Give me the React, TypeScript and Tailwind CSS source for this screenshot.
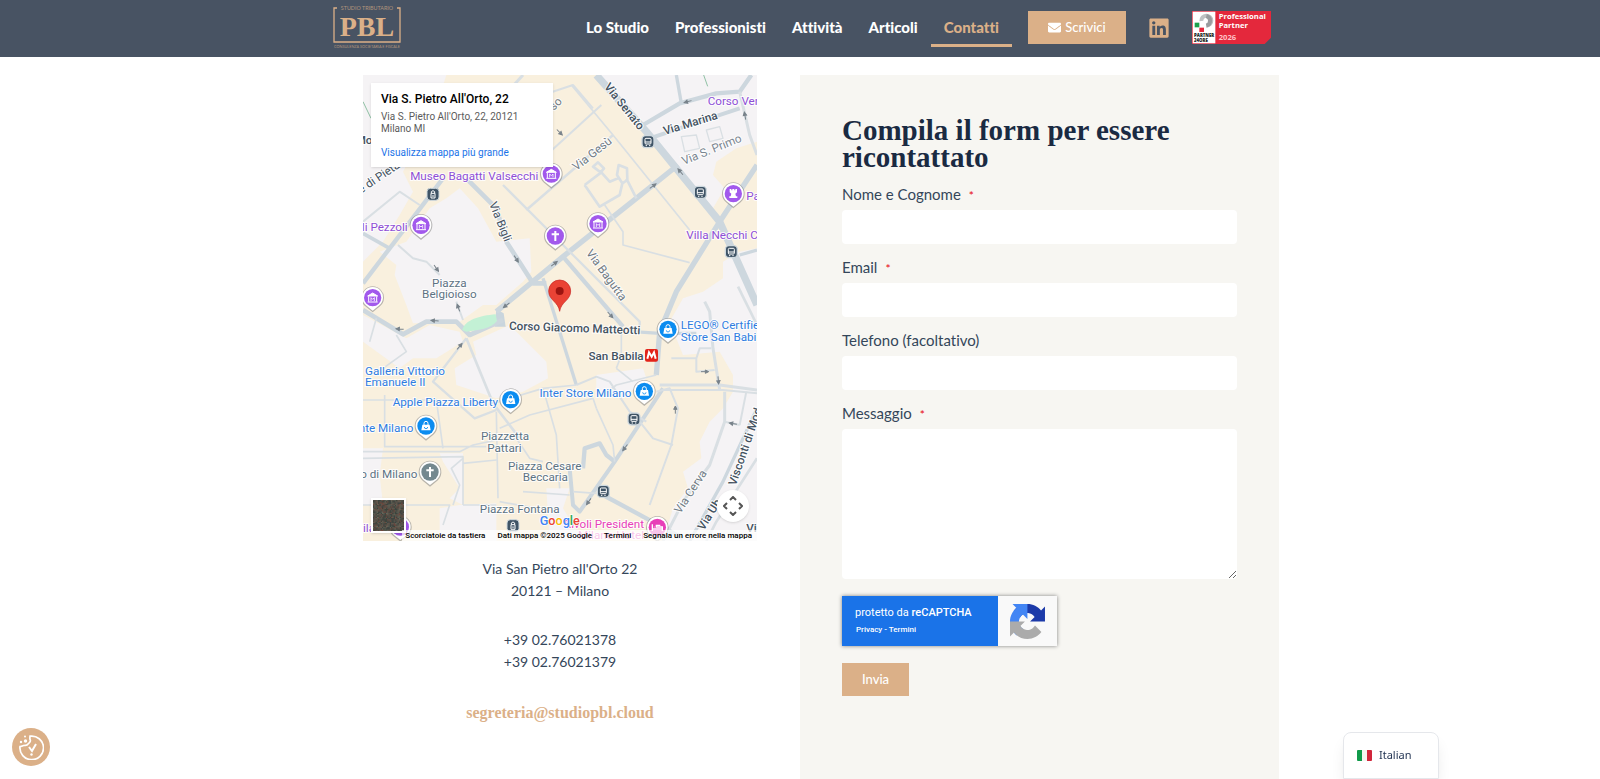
import type { ReactNode } from 'react'
import { FaEnvelope, FaLinkedin } from 'react-icons/fa'

type Point = { x: number; y: number }

type Label = Point & {
  text: string
  fill: string
  rotate?: number
  anchor?: 'start' | 'middle' | 'end'
  weight?: number
}

type Road = { d: string; width: number }

const PURPLE = '#8e4fd6'
const BLUE = '#2f7de1'
const SLATE = '#5d7383'
const STREET = '#44525f'
const PINK = '#e83fb8'

const greyAreas = [
  'M0 0H250L215 110L120 290L150 350L110 420L60 500L0 560Z',
  'M290 340L345 400L400 500L500 490L505 590L480 620L400 690L360 690L290 740L150 745L130 690L95 600L100 570L50 530L130 500L200 400L250 370Z',
  'M700 0H1182V200L1120 220L1060 260L1050 300L1085 340L1050 400L830 130Z',
  'M1182 520L1130 530L1080 560L1080 610L1020 650L960 670L920 740L960 840L1070 830L1110 900V950L1080 1000L1040 1040L1010 1100L1015 1150L960 1190L975 1240L930 1300L900 1398H1182Z',
  'M330 800L440 750L550 860L555 910L480 950L400 970L280 930L275 880L340 840Z',
  'M0 720L130 790L200 750L290 770L300 800L220 850L150 850L110 880L0 800Z',
  'M290 1290L400 1285V1398H230V1300Z',
  'M0 1120H60L50 1200L60 1290H0Z',
  'M700 900L840 880L850 910L780 970L700 950Z',
  'M230 1135H300V1290L260 1270L290 1240L240 1160Z',
  'M550 1240H620L600 1300L660 1398H560Z',
]

const roads: Road[] = [
  // main streets
  { d: 'M700 0L850 170L1070 440L1182 690', width: 22 },
  { d: 'M1182 270L1070 440L940 650L890 770L880 900', width: 16 },
  { d: 'M945 270L820 370L600 545L400 710', width: 16 },
  { d: 'M310 310L400 400L430 500L510 625L550 625', width: 14 },
  { d: 'M540 610L640 930', width: 10 },
  { d: 'M0 705L120 778L190 740L280 740L320 780L420 735', width: 14 },
  { d: 'M0 625L80 520L240 310', width: 13 },
  { d: 'M840 150L950 85L1060 55L1130 50L1165 0', width: 13 },
  { d: 'M860 190L1010 140L1130 100', width: 12 },
  { d: 'M600 545L780 755', width: 13 },
  { d: 'M810 770L890 775H1000', width: 10 },
  { d: 'M660 1180L665 1120L710 1105L730 1140L755 1160', width: 13 },
  { d: 'M900 940L755 1160L650 1310L630 1290L620 1180', width: 12 },
  { d: 'M720 1260L850 1330L960 1390', width: 13 },
  { d: 'M0 475L80 520', width: 11 },
  { d: 'M1130 540L1182 525', width: 10 },
  // secondary streets
  { d: 'M890 930H1070L1182 945', width: 9 },
  { d: 'M1025 680L1040 710L1050 820L1070 945', width: 9 },
  { d: 'M1125 635L1182 750', width: 8 },
  { d: 'M1085 950V1040L1040 1170L960 1280L900 1398', width: 9 },
  { d: 'M1182 1000L1080 1220L980 1398', width: 10 },
  { d: 'M1182 1150L1060 1340L1030 1398', width: 8 },
  { d: 'M940 0L955 85', width: 10 },
  { d: 'M1130 50L1160 180L1182 240', width: 9 },
  { d: 'M480 0L370 120', width: 9 },
  { d: 'M310 790L390 985L470 1090', width: 8 },
  { d: 'M310 790L210 920L335 1030L400 1005', width: 7 },
  { d: 'M420 330L600 510L770 680L830 740V770', width: 7 },
  { d: 'M490 405L750 180', width: 7 },
  { d: 'M625 30L750 180L980 465', width: 5 },
  { d: 'M540 60L630 30L690 100', width: 6 },
  { d: 'M540 250L715 90', width: 6 },
  { d: 'M725 390L780 470V510L980 563', width: 5 },
  { d: 'M820 370L790 310M665 330L710 395L770 360L778 325L762 300L767 270L792 280L793 315L778 325M665 330L715 292L740 320L765 310M690 275L705 262L723 280L713 292Z', width: 8 },
  { d: 'M955 185L1000 180L1010 220L965 230Z M1030 165L1070 155L1080 190L1040 200Z', width: 4 },
  { d: 'M880 950L920 940L945 1000L925 1110L860 1290', width: 6 },
  { d: 'M830 1040L870 1090L930 1110', width: 6 },
  { d: 'M925 850H1000L1010 820H1045M1000 850V890L1055 885', width: 6 },
  { d: 'M1182 955L1080 945L900 945', width: 6 },
  { d: 'M1130 1050L1085 1040M1150 950L1130 1050', width: 6 },
  { d: 'M640 930L700 905L740 920L800 1010L850 1040', width: 6 },
  { d: 'M390 985L540 940L640 930M410 1060L500 1020L690 970M540 940L580 1080L590 1240', width: 5 },
  { d: 'M700 1000L750 1110L755 1160M690 970L700 1000', width: 5 },
  { d: 'M760 880L810 920M880 900L760 930L720 960M775 770V840L760 880', width: 5 },
  { d: 'M0 975H220L240 1120M65 960V1115H370M0 1130H290L330 1110L470 1080', width: 5 },
  { d: 'M0 1150L300 1145V1290M300 1165L400 1155M400 1010L405 1270', width: 5 },
  { d: 'M0 1290H260L240 1350M300 1290H400M410 1280L520 1300', width: 5 },
  { d: 'M300 1150L265 1180L290 1230L270 1290', width: 5 },
  { d: 'M105 510L150 550L190 560L230 600', width: 6 },
  { d: 'M300 735L280 680M0 440L110 350L170 390', width: 6 },
  { d: 'M40 730L20 800M60 880L130 830L100 780', width: 5 },
  { d: 'M460 1090L500 1150L540 1160M480 1250L620 1260M630 1250L700 1255', width: 5 },
]

const streetLabels: Label[] = [
  { text: 'Via Senato', x: 722, y: 36, rotate: 51, fill: STREET, weight: 500 },
  { text: 'Via Marina', x: 905, y: 180, rotate: -17, fill: STREET, weight: 500 },
  { text: 'Via S. Primo', x: 962, y: 270, rotate: -22, fill: '#7a8590' },
  { text: 'Via Gesù', x: 640, y: 288, rotate: -38, fill: '#6f7a84' },
  { text: 'Via Bigli', x: 378, y: 386, rotate: 68, fill: STREET },
  { text: 'Via Bagutta', x: 668, y: 534, rotate: 54, fill: '#6f7a84' },
  { text: 'Corso Giacomo Matteotti', x: 438, y: 764, rotate: 2, fill: STREET, weight: 500 },
  { text: 'Via Cerva', x: 952, y: 1318, rotate: -57, fill: '#6f7a84' },
  { text: 'Visconti di Mod', x: 1118, y: 1234, rotate: -71, fill: STREET, weight: 500 },
  { text: 'Via Ub', x: 1022, y: 1368, rotate: -58, fill: STREET, weight: 500 },
  { text: 'e di Pietà', x: -6, y: 356, rotate: -34, fill: STREET },
  { text: 'Mo', x: -22, y: 208, fill: STREET, weight: 500 },
  { text: 'Vi', x: 1150, y: 1372, fill: STREET, weight: 500 },
  { text: 'so', x: 572, y: 108, rotate: -45, fill: '#6f7a84' },
]

const placeLabels: Label[] = [
  { text: 'Museo Bagatti Valsecchi', x: 526, y: 315, anchor: 'end', fill: PURPLE },
  { text: 'li Pezzoli', x: 134, y: 469, anchor: 'end', fill: PURPLE },
  { text: 'Corso Ven', x: 1034, y: 90, fill: PURPLE },
  { text: 'Pa', x: 1150, y: 375, fill: PURPLE },
  { text: 'Villa Necchi C', x: 970, y: 493, fill: PURPLE },
  { text: 'Piazza', x: 259, y: 635, anchor: 'middle', fill: SLATE },
  { text: 'Belgioioso', x: 259, y: 670, anchor: 'middle', fill: SLATE },
  { text: 'LEGO® Certifie', x: 953, y: 763, fill: BLUE },
  { text: 'Store San Babi', x: 953, y: 798, fill: BLUE },
  { text: 'San Babila', x: 842, y: 854, anchor: 'end', fill: STREET, weight: 500 },
  { text: 'Galleria Vittorio', x: 6, y: 899, fill: BLUE },
  { text: 'Emanuele II', x: 6, y: 934, fill: BLUE },
  { text: 'Apple Piazza Liberty', x: 405, y: 992, anchor: 'end', fill: BLUE },
  { text: 'Inter Store Milano', x: 805, y: 967, anchor: 'end', fill: BLUE },
  { text: 'nte Milano', x: 151, y: 1071, anchor: 'end', fill: BLUE },
  { text: 'Piazzetta', x: 426, y: 1096, anchor: 'middle', fill: SLATE },
  { text: 'Pattari', x: 424, y: 1131, anchor: 'middle', fill: SLATE },
  { text: 'o di Milano', x: 163, y: 1210, anchor: 'end', fill: SLATE },
  { text: 'Piazza Cesare', x: 545, y: 1184, anchor: 'middle', fill: SLATE },
  { text: 'Beccaria', x: 547, y: 1219, anchor: 'middle', fill: SLATE },
  { text: 'Piazza Fontana', x: 470, y: 1315, anchor: 'middle', fill: SLATE },
  { text: 'Rivoli President', x: 843, y: 1358, anchor: 'end', fill: PINK },
  { text: 'Milano Hotel', x: 843, y: 1393, anchor: 'end', fill: PINK },
  { text: 'ila', x: 0, y: 1372, fill: PURPLE },
]

const arrows = [
  { x: 870, y: 333, r: -36 },
  { x: 574, y: 566, r: -38 },
  { x: 430, y: 691, r: 142 },
  { x: 460, y: 552, r: 57 },
  { x: 742, y: 720, r: 48 },
  { x: 220, y: 580, r: 55 },
  { x: 286, y: 698, r: -110 },
  { x: 215, y: 737, r: 184 },
  { x: 110, y: 762, r: 184 },
  { x: 290, y: 814, r: -50 },
  { x: 974, y: 80, r: 165 },
  { x: 1146, y: 122, r: -100 },
  { x: 952, y: 290, r: -130 },
  { x: 1026, y: 890, r: 0 },
  { x: 1066, y: 916, r: 85 },
  { x: 937, y: 1004, r: -90 },
  { x: 1110, y: 1046, r: 190 },
  { x: 786, y: 1118, r: 128 },
  { x: 677, y: 1280, r: 125 },
  { x: 590, y: 172, r: 45 },
]

const transitStops = [
  { x: 855, y: 200 },
  { x: 1012, y: 352 },
  { x: 1105, y: 530 },
  { x: 813, y: 1032 },
  { x: 721, y: 1249 },
]

const lockStops = [
  { x: 210, y: 358 },
  { x: 450, y: 1352 },
]

function Pin({ x, y, fill, children }: Point & { fill: string; children: ReactNode }) {
  return (
    <g transform={`translate(${x} ${y})`}>
      <path d="M0 44L-22 26A34 34 0 1 1 22 26Z" fill="#777" opacity="0.5" />
      <path d="M0 39L-20 23A31 31 0 1 1 20 23Z" fill="#fff" />
      <circle r="26" fill={fill} />
      {children}
    </g>
  )
}

function Museum() {
  return (
    <g fill="none" stroke="#fff" strokeWidth="3">
      <path d="M-15 -5L0 -14L15 -5Z" fill="#fff" />
      <path d="M-12 -4V12M12 -4V12M-15 13H15" />
      <path d="M-5 10V0L0 5L5 0V10" strokeWidth="2.5" />
    </g>
  )
}

function ShopBag() {
  return (
    <g>
      <path d="M-11 -4H11L14 13H-14Z" fill="#fff" />
      <path d="M-6 -2V-8A6 6 0 0 1 6 -8V-2" fill="none" stroke="#fff" strokeWidth="3" />
      <path d="M-5 3A5 5 0 0 0 5 3" fill="none" stroke="#0b8cf0" strokeWidth="2.5" />
    </g>
  )
}

function Cross() {
  return <path d="M0 -15V15M-11 -5H11" stroke="#fff" strokeWidth="6" />
}

function MapText({ label }: { label: Label }) {
  return (
    <text
      transform={`translate(${label.x} ${label.y}) rotate(${label.rotate ?? 0})`}
      textAnchor={label.anchor ?? 'start'}
      fill={label.fill}
      stroke="#ffffff"
      strokeOpacity="0.85"
      strokeWidth="6"
      paintOrder="stroke"
      fontWeight={label.weight ?? 400}
    >
      {label.text}
    </text>
  )
}

function StreetMap() {
  return (
    <svg viewBox="0 0 1182 1398" preserveAspectRatio="xMidYMid slice" className="block h-full w-full font-[Roboto,sans-serif] text-[35px]" aria-label="Mappa">
      <rect width="1182" height="1398" fill="#f9f0de" />
      {greyAreas.map((d) => (
        <path key={d} d={d} fill="#f5f3f5" />
      ))}
      <path d="M400 703L422 715L428 755L395 755Z" fill="#c9d5dd" />
      {roads.map((road) => (
        <path
          key={road.d}
          d={road.d}
          fill="none"
          stroke={road.width > 9 ? '#cdd7de' : '#d9dfe3'}
          strokeWidth={road.width}
          strokeLinejoin="round"
        />
      ))}
      <path d="M298 765C305 735 350 722 398 718L402 738C385 760 350 765 310 770Z" fill="#c3f1d5" />
      <path d="M0 80L24 130M1022 0L1034 34" stroke="#8fc0a4" strokeWidth="3" />
      {arrows.map((a) => (
        <path key={`${a.x}-${a.y}`} d="M-12 0H2M1 -5L11 0L1 5Z" transform={`translate(${a.x} ${a.y}) rotate(${a.r})`} fill="#78828a" stroke="#78828a" strokeWidth="3" />
      ))}

      {streetLabels.map((label) => (
        <MapText key={label.text} label={label} />
      ))}
      {placeLabels.map((label) => (
        <MapText key={label.text} label={label} />
      ))}

      {transitStops.map((s) => (
        <g key={s.x} transform={`translate(${s.x} ${s.y})`}>
          <rect x="-18" y="-18" width="36" height="36" rx="11" fill="#3f5466" stroke="#cfd9df" strokeWidth="4" />
          <rect x="-9" y="-10" width="18" height="17" rx="3" fill="none" stroke="#fff" strokeWidth="3" />
          <path d="M-9 1H9M-7 12H-3M3 12H7" stroke="#fff" strokeWidth="3" />
        </g>
      ))}
      {lockStops.map((s) => (
        <g key={s.x} transform={`translate(${s.x} ${s.y})`}>
          <rect x="-18" y="-18" width="36" height="36" rx="10" fill="#3f5466" stroke="#cfd9df" strokeWidth="3" />
          <path d="M-5 -4V-8Q0 -14 5 -8V-4M-6 -3H6V11H-6ZM0 2V8" fill="none" stroke="#fff" strokeWidth="3" />
        </g>
      ))}

      <Pin x={565} y={297} fill="#a259ec"><Museum /></Pin>
      <Pin x={174} y={451} fill="#a259ec"><Museum /></Pin>
      <Pin x={705} y={446} fill="#a259ec"><Museum /></Pin>
      <Pin x={29} y={668} fill="#a259ec"><Museum /></Pin>
      <Pin x={577} y={483} fill="#a259ec"><Cross /></Pin>
      <Pin x={1111} y={356} fill="#a259ec">
        <path d="M-11 -14H-6V-10H-3V-14H3V-10H6V-14H11V-4L6 0L8 8H12V13H-12V8H-8L-6 0L-11 -4Z" fill="#fff" />
      </Pin>
      <Pin x={112} y={1356} fill="#a259ec"><Museum /></Pin>
      <Pin x={915} y={763} fill="#0b8cf0"><ShopBag /></Pin>
      <Pin x={844} y={949} fill="#0b8cf0"><ShopBag /></Pin>
      <Pin x={443} y={974} fill="#0b8cf0"><ShopBag /></Pin>
      <Pin x={189} y={1053} fill="#0b8cf0"><ShopBag /></Pin>
      <Pin x={201} y={1191} fill="#74888f"><Cross /></Pin>
      <Pin x={883} y={1357} fill={PINK}>
        <path d="M-15 -9V11M-15 5H15M15 11V-1H-3V-6H9M-9 -2V0" fill="none" stroke="#fff" strokeWidth="4" />
      </Pin>

      <rect x="846" y="822" width="39" height="38" rx="6" fill="#e2231a" />
      <path d="M853 851L858 832L866 845L873 832L878 851" fill="none" stroke="#fff" strokeWidth="6" />

      <path d="M590 709C586 680 557 676 557 648A33 33 0 0 1 623 648C623 676 594 680 590 709Z" fill="#ea4335" stroke="#c5221f" strokeWidth="2" />
      <circle cx="590" cy="648" r="12" fill="#9c1410" />

      <text x="530" y="1351" fontSize="38" fontWeight="500" stroke="#fff" strokeWidth="4" paintOrder="stroke">
        <tspan fill="#4285f4">G</tspan>
        <tspan fill="#ea4335">o</tspan>
        <tspan fill="#fbbc05">o</tspan>
        <tspan fill="#4285f4">g</tspan>
        <tspan fill="#34a853">l</tspan>
        <tspan fill="#ea4335">e</tspan>
      </text>
    </svg>
  )
}

const satelliteTones = ['#4c4a44', '#5d5248', '#3d443b', '#6b5b50', '#545a50', '#70483e', '#3a4341', '#66675a']

function SatelliteThumb() {
  const cells: string[] = []
  let seed = 41
  for (let i = 0; i < 576; i++) {
    seed = (seed * 1103 + 12345) % 65521
    cells.push(satelliteTones[seed % 8])
  }

  return (
    <svg viewBox="0 0 24 24" className="h-full w-full" aria-hidden="true">
      <rect width="24" height="24" fill="#4c4a44" />
      {cells.map((tone, i) => (
        <rect key={i} x={i % 24} y={Math.floor(i / 24)} width="1" height="1" fill={tone} />
      ))}
    </svg>
  )
}

function Logo() {
  return (
    <svg viewBox="0 0 68 43" className="h-[43px] w-[68px]" fill="#dbb088" aria-label="Studio Tributario PBL">
      <path d="M4 2H1V36H67V2H64" fill="none" stroke="#dbb088" strokeWidth="1.3" />
      <text x="34" y="4" textAnchor="middle" fontFamily="Lato, sans-serif" fontSize="5.4" opacity="0.7">STUDIO TRIBUTARIO</text>
      <text x="34" y="30" textAnchor="middle" fontFamily="Liberation Serif, serif" fontSize="28" fontWeight="700">PBL</text>
      <text x="34" y="42" textAnchor="middle" fontFamily="Lato, sans-serif" fontSize="3.8" opacity="0.7">CONSULENZA SOCIETARIA E FISCALE</text>
    </svg>
  )
}

function PartnerBadge() {
  return (
    <svg viewBox="0 0 237 99" className="h-[33px] w-[79px] font-['Open_Sans',sans-serif] font-bold" aria-label="Professional Partner 2026">
      <path d="M0 0H237V80L218 99H0Z" fill="#e4283c" />
      <rect x="2" y="2" width="68" height="95" fill="#fff" />
      <path d="M28 30A15 15 0 1 1 43 44" fill="none" stroke="#bfc1c3" strokeWidth="12" />
      <path d="M43 15A15 15 0 0 1 43 44" fill="none" stroke="#9a9c9f" strokeWidth="12" />
      <rect x="8" y="35" width="14" height="14" fill="#1ca14b" />
      <rect x="22" y="50" width="14" height="13" fill="#e4283c" />
      <text x="6" y="79" fontSize="13" fontWeight="800" fill="#222">PARTNER</text>
      <text x="6" y="92" fontSize="13" fontWeight="800" fill="#222">24ORE</text>
      <text x="80" y="25" fontSize="23" fill="#fff">Professional</text>
      <text x="80" y="51" fontSize="23" fill="#fff">Partner</text>
      <text x="80" y="88" fontSize="23" fill="#ffc3c8">2026</text>
    </svg>
  )
}

const navItems = ['Lo Studio', 'Professionisti', 'Attività', 'Articoli', 'Contatti']

function Header() {
  return (
    <header className="bg-[#485363] pl-1">
      <div className="mx-auto flex h-[57px] max-w-[938px] items-center pb-0.5">
        <a href="#home" className="shrink-0">
          <Logo />
        </a>
        <nav className="ml-auto flex">
          {navItems.map((item) => (
            <a
              key={item}
              href="#nav"
              className={
                item === 'Contatti'
                  ? 'border-b-[3px] border-[#dbb088] px-[13px] pt-[9px] pb-[7px] text-[15px] leading-[19px] font-black text-[#dbb088]'
                  : 'border-b-[3px] border-transparent px-[13px] pt-[9px] pb-[7px] text-[15px] leading-[19px] font-black text-white'
              }
            >
              {item}
            </a>
          ))}
        </nav>
        <a href="#scrivici" className="ml-4 flex h-[33px] w-[98px] items-center justify-center gap-1 bg-[#dbb088] text-[13px] font-medium text-white">
          <FaEnvelope className="h-[13px] w-[13px]" />
          Scrivici
        </a>
        <a href="#linkedin" aria-label="LinkedIn" className="ml-[22px]">
          <FaLinkedin className="h-[22px] w-[22px] text-[#dbb088]" />
        </a>
        <a href="#partner" className="ml-[22px] shrink-0">
          <PartnerBadge />
        </a>
      </div>
    </header>
  )
}

function MapPanel() {
  return (
    <div className="relative h-[466px] w-full overflow-hidden font-[Roboto,sans-serif]">
      <StreetMap />
      <div className="absolute top-2 left-2 h-[84px] w-[182px] bg-white px-[10px] pt-2 shadow">
        <p className="text-xs leading-4 font-medium text-black">Via S. Pietro All'Orto, 22</p>
        <p className="mt-1 text-[10px] leading-3 text-[#5b5b5b]">
          Via S. Pietro All'Orto, 22, 20121
          <br />
          Milano MI
        </p>
        <a href="#mappa" className="mt-3 block text-[10px] leading-3 text-[#1a73e8]">
          Visualizza mappa più grande
        </a>
      </div>
      <button type="button" aria-label="Mostra immagini satellitari" className="absolute bottom-2 left-2 h-[35px] w-[35px] border-2 border-white bg-white shadow">
        <SatelliteThumb />
      </button>
      <button type="button" aria-label="Controlli fotocamera mappa" className="absolute right-2 bottom-[19px] flex h-8 w-8 items-center justify-center rounded-full bg-white shadow">
        <svg viewBox="0 0 20 20" className="h-5 w-5" fill="none" stroke="#555" strokeWidth="2" aria-hidden="true">
          <path d="M7 4L10 1L13 4M7 16L10 19L13 16M4 7L1 10L4 13M16 7L19 10L16 13" />
        </svg>
      </button>
      <div className="absolute right-0 bottom-0 flex h-[11px] items-center gap-3 bg-white/70 pr-[5px] pl-[3px] text-[8px] leading-[11px] font-medium whitespace-nowrap text-black">
        <button type="button">Scorciatoie da tastiera</button>
        <span>Dati mappa ©2025 Google</span>
        <a href="#termini">Termini</a>
        <a href="#segnala">Segnala un errore nella mappa</a>
      </div>
    </div>
  )
}

function Contacts() {
  return (
    <address className="mt-[17px] flex flex-col gap-[27px] text-center text-sm leading-[22px] text-[#34465a] not-italic">
      <p>
        Via San Pietro all'Orto 22
        <br />
        20121 – Milano
      </p>
      <p>
        +39 02.76021378
        <br />
        +39 02.76021379
      </p>
      <a href="mailto:segreteria@studiopbl.cloud" className="font-['Liberation_Serif',serif] text-base leading-[26px] font-bold text-[#dbb088]">
        segreteria@studiopbl.cloud
      </a>
    </address>
  )
}

type FieldProps = {
  id: string
  label: string
  type?: string
  required?: boolean
}

function Field({ id, label, type = 'text', required = false }: FieldProps) {
  return (
    <div className="mb-[13px]">
      <label htmlFor={id} className="mb-[5px] block text-[15px] leading-[21px] text-[#34465a]">
        {label}
        {required && <span className="ml-2 text-xs text-red-600">*</span>}
      </label>
      {type === 'textarea' ? (
        <textarea id={id} className="block h-[150px] w-full resize-y rounded-sm bg-white px-3 py-2 text-sm focus:outline-none" />
      ) : (
        <input id={id} type={type} className="block h-[34px] w-full rounded-sm bg-white px-3 text-sm focus:outline-none" />
      )}
    </div>
  )
}

function Recaptcha() {
  return (
    <div className="flex h-[50px] w-[215px] font-[Roboto,sans-serif] shadow-[0_0_4px_#808080]">
      <div className="flex w-[156px] flex-col bg-[#1a73e8] pt-[9px] pl-[13px] text-white">
        <p className="text-[11px] leading-4">
          protetto da <strong className="font-medium">reCAPTCHA</strong>
        </p>
        <p className="mt-[3px] pl-px text-[8px] leading-3 font-medium">
          <a href="#privacy">Privacy</a> - <a href="#termini">Termini</a>
        </p>
      </div>
      <div className="flex flex-1 items-center justify-center bg-[#f9f9f9]">
        <svg viewBox="0 0 64 64" className="h-[35px] w-[35px]" aria-hidden="true">
          <path fill="#1c3aa9" d="M64 31.955l-.033-1.37V4.687l-7.16 7.16C50.948 4.674 42.033.093 32.05.093c-10.4 0-19.622 4.96-25.458 12.64l11.736 11.86a15.55 15.55 0 0 1 4.754-5.334c2.05-1.6 4.952-2.906 8.968-2.906.485 0 .86.057 1.135.163 4.976.393 9.288 3.14 11.828 7.124l-8.307 8.307L64 31.953" />
          <path fill="#4285f4" d="M31.862.094l-1.37.033H4.594l7.16 7.16C4.58 13.147 0 22.06 0 32.046c0 10.4 4.96 19.622 12.64 25.458L24.5 45.768a15.55 15.55 0 0 1-5.334-4.754c-1.6-2.05-2.906-4.952-2.906-8.968 0-.485.057-.86.163-1.135.393-4.976 3.14-9.288 7.124-11.828l8.307 8.307L31.86.095" />
          <path fill="#ababab" d="M.001 32.045l.033 1.37v25.898l7.16-7.16c5.86 7.173 14.774 11.754 24.76 11.754 10.4 0 19.622-4.96 25.458-12.64l-11.736-11.86a15.55 15.55 0 0 1-4.754 5.334c-2.05 1.6-4.952 2.906-8.968 2.906-.485 0-.86-.057-1.135-.163-4.976-.393-9.288-3.14-11.828-7.124l8.307-8.307c-10.522.04-22.4.066-27.295-.005" />
        </svg>
      </div>
    </div>
  )
}

function ContactForm() {
  return (
    <form className="bg-[#f7f6f2] p-[42px]" onSubmit={(event) => event.preventDefault()}>
      <h2 className="mb-[13px] font-['Liberation_Serif',serif] text-[29px] leading-[27px] font-bold text-[#1a2a42]">
        Compila il form per essere ricontattato
      </h2>
      <Field id="name" label="Nome e Cognome" required />
      <Field id="email" label="Email" type="email" required />
      <Field id="phone" label="Telefono (facoltativo)" type="tel" />
      <Field id="message" label="Messaggio" type="textarea" required />
      <div className="mt-[17px]">
        <Recaptcha />
      </div>
      <button type="submit" className="mt-[17px] h-[33px] w-[67px] bg-[#dbb088] text-[13px] font-medium text-white">
        Invia
      </button>
    </form>
  )
}

function CookieButton() {
  return (
    <button type="button" aria-label="Preferenze cookie" className="fixed bottom-[13px] left-3 flex h-[38px] w-[38px] items-center justify-center rounded-full bg-[#dbb088]">
      <svg viewBox="0 0 26 26" className="h-[26px] w-[26px]" fill="none" stroke="#fff" strokeWidth="1.7" aria-hidden="true">
        <path d="M12 2.2C12 4 11.5 4.6 12.3 6.2C13 8 11 9 10 10C9 12 7.5 11 5.5 11.5C4 12 3.5 12.5 2 12.5A11.8 11.8 0 1 0 12 2.2Z" />
        <path d="M11 13L14 17L18 10" strokeWidth="2" />
        <circle cx="7" cy="2.5" r="1" fill="#fff" stroke="none" />
        <circle cx="3" cy="8" r="1.2" fill="#fff" stroke="none" />
        <circle cx="7.5" cy="7" r="1.7" fill="#fff" stroke="none" />
        <circle cx="13.5" cy="20.5" r="1.2" fill="#fff" stroke="none" />
      </svg>
    </button>
  )
}

function LanguageSwitcher() {
  return (
    <button type="button" className="fixed right-[161px] bottom-0 flex h-[47px] w-[96px] items-center gap-[7px] rounded-t-lg border border-gray-200 bg-white pl-[13px] font-['Noto_Sans',sans-serif] text-[11px] text-[#1e3050] shadow-lg">
      <svg viewBox="0 0 15 11" className="h-[11px] w-[15px]" aria-hidden="true">
        <rect width="15" height="11" rx="1" fill="#f4f5f0" />
        <path d="M5 0H1Q0 0 0 1V10Q0 11 1 11H5Z" fill="#109a4a" />
        <path d="M10 0H14Q15 0 15 1V10Q15 11 14 11H10Z" fill="#d1263b" />
      </svg>
      Italian
    </button>
  )
}

export default function App() {
  return (
    <div className="flex min-h-screen flex-col bg-white font-[Lato,sans-serif] [font-variant-ligatures:none]">
      <Header />
      <main className="mx-auto grid w-full max-w-[958px] flex-1 grid-cols-2 pt-[18px]">
        <section className="pr-[43px] pl-[42px]">
          <MapPanel />
          <Contacts />
        </section>
        <ContactForm />
      </main>
      <CookieButton />
      <LanguageSwitcher />
    </div>
  )
}
